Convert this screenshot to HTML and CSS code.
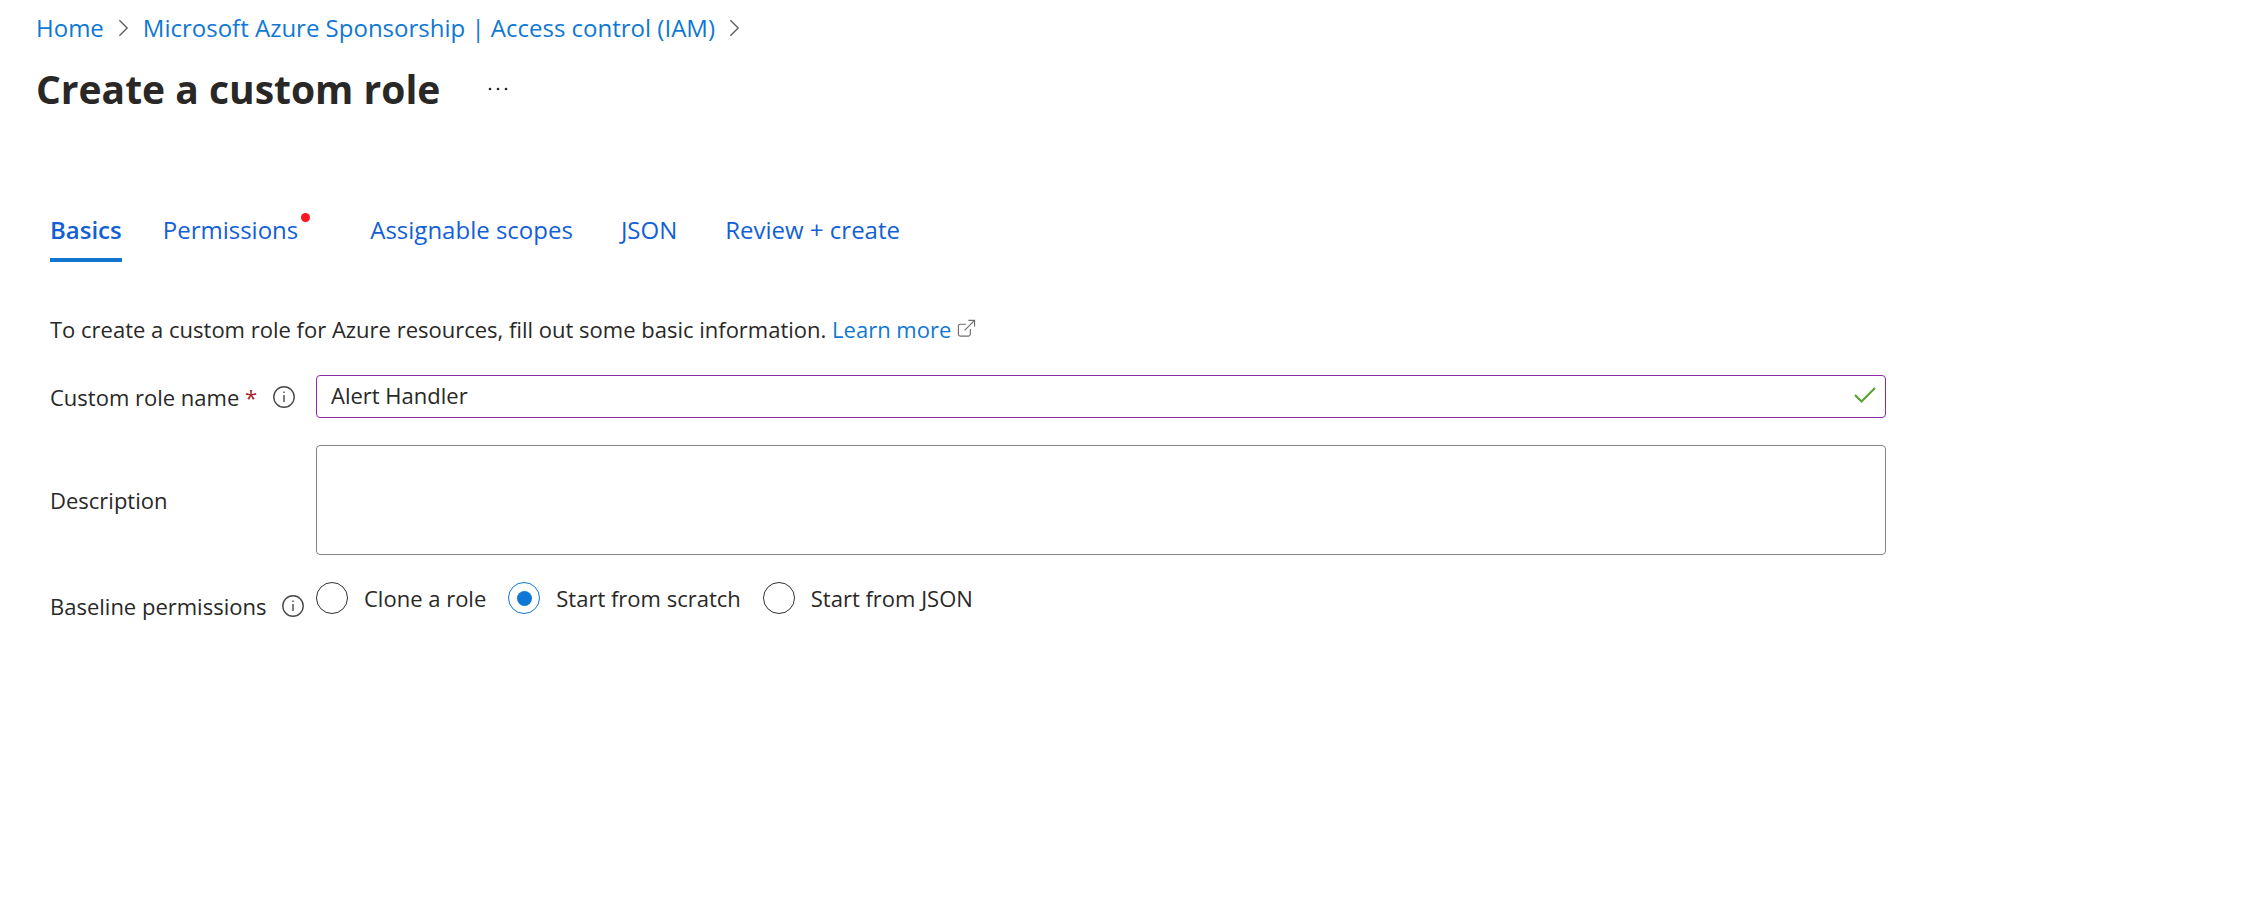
FILE: index.html
```html
<!DOCTYPE html>
<html lang="en">
<head>
<meta charset="utf-8">
<meta name="viewport" content="width=device-width, initial-scale=1">
<title>Create a custom role</title>
<link rel="stylesheet" href="styles.css">
</head>
<body>
<header class="page-header">
  <nav class="breadcrumb" aria-label="Breadcrumb">
    <a class="link" href="#home">Home</a>
    <svg class="chevron" viewBox="0 0 12 20" aria-hidden="true"><path d="M1.500 1.500L10 10L1.500 18.500"/></svg>
    <a class="link" href="#iam">Microsoft Azure Sponsorship | Access control (IAM)</a>
    <svg class="chevron" viewBox="0 0 12 20" aria-hidden="true"><path d="M1.500 1.500L10 10L1.500 18.500"/></svg>
  </nav>
  <div class="title-row">
    <h1 class="title">Create a custom role</h1>
    <button class="more" type="button" aria-label="More actions">
      <svg class="more-icon" viewBox="0 0 20 4" aria-hidden="true"><circle cx="2" cy="2" r="1.300"/><circle cx="10" cy="2" r="1.300"/><circle cx="18" cy="2" r="1.300"/></svg>
    </button>
  </div>
</header>
<main class="content">
  <div class="tabs" role="tablist">
    <button class="tab tab-active" type="button" role="tab" aria-selected="true">Basics</button>
    <button class="tab tab-flagged" type="button" role="tab" aria-selected="false">Permissions<span class="dot"></span></button>
    <button class="tab" type="button" role="tab" aria-selected="false">Assignable scopes</button>
    <button class="tab" type="button" role="tab" aria-selected="false">JSON</button>
    <button class="tab" type="button" role="tab" aria-selected="false">Review + create</button>
  </div>
  <p class="intro">To create a custom role for Azure resources, fill out some basic information. <a class="link" href="#learn">Learn more</a>
    <svg class="external" viewBox="0 0 20 20" aria-hidden="true"><path d="M9.500 5.500H3.500Q1.500 5.500 1.500 7.500V16Q1.500 18 3.500 18H12Q14 18 14 16V10.500M8 12L18.500 1.500M12 1.500H18.500V8"/></svg></p>
  <form class="form">
    <div class="row">
      <div class="label-cell">
        <label for="role-name">Custom role name <span class="required">*</span></label>
        <svg class="info" viewBox="0 0 22 22" role="img" aria-label="Info"><circle cx="11" cy="11" r="10.200"/><path d="M11 9V16M11 5.500V7"/></svg>
      </div>
      <div class="input-wrap">
        <input class="text-input" id="role-name" type="text" value="Alert Handler">
        <svg class="check" viewBox="0 0 22 16" aria-hidden="true"><path d="M1 8L7.500 14.500L21 1"/></svg>
      </div>
    </div>
    <div class="row">
      <div class="label-cell"><label for="description">Description</label></div>
      <textarea class="text-area" id="description"></textarea>
    </div>
    <div class="row row-options" role="radiogroup" aria-labelledby="baseline">
      <div class="label-cell label-low">
        <span id="baseline">Baseline permissions</span>
        <svg class="info" viewBox="0 0 22 22" role="img" aria-label="Info"><circle cx="11" cy="11" r="10.200"/><path d="M11 9V16M11 5.500V7"/></svg>
      </div>
      <div class="options">
        <label class="option"><input class="radio" type="radio" name="baseline">Clone a role</label>
        <label class="option"><input class="radio" type="radio" name="baseline" checked>Start from scratch</label>
        <label class="option"><input class="radio" type="radio" name="baseline">Start from JSON</label>
      </div>
    </div>
  </form>
</main>
</body>
</html>
```
FILE: styles.css
```css
* { box-sizing: border-box; }

body {
  margin: 0;
  background: #fff;
  color: #292827;
  font: 22px/32px "Open Sans", "Noto Sans", sans-serif;
}

.link { color: #0f78d4; text-decoration: none; }

.page-header { padding: 12px 36px 0; }

.breadcrumb { display: flex; align-items: center; gap: 14px; font-size: 24px; }

.chevron { width: 11px; height: 20px; fill: none; stroke: #605e5c; stroke-width: 1.5; }

.title-row { display: flex; align-items: center; gap: 44px; margin-top: 16px; }

.title { margin: 0; font-size: 39px; line-height: 58px; font-weight: 700; }

.more { display: flex; padding: 4px; border: 0; background: none; }

.more-icon { width: 20px; height: 4px; fill: #292827; }

.content { padding: 86px 50px 0; }

.tabs { display: flex; gap: 41px; }

.tab {
  padding: 10px 0 12px;
  border: 0;
  border-bottom: 4px solid transparent;
  background: none;
  color: #135fd6;
  font: inherit;
  font-size: 24px;
}

.tab-active { border-color: #1176d0; font-weight: 600; }

.tab-flagged { position: relative; margin-right: 24px; }

.tab-flagged ~ .tab { margin-left: 7px; }

.dot {
  position: absolute;
  top: 9px;
  right: -12px;
  width: 9px;
  height: 9px;
  border-radius: 50%;
  background: #fb1620;
}

.intro { margin: 51px 0 30px; }

.external { width: 19px; height: 19px; fill: none; stroke: #706e6c; stroke-width: 1.2; }

.form { display: grid; gap: 27px; max-width: 1836px; }

.row { display: grid; grid-template-columns: 266px 1fr; align-items: center; }

.row-options { align-items: start; }

.label-cell { display: flex; align-items: center; gap: 16px; white-space: nowrap; }

.label-low { padding-top: 8px; }

.required { color: #a4262c; }

.info { flex: none; width: 22px; height: 22px; fill: none; stroke: #4a4948; stroke-width: 1.4; }

.input-wrap { position: relative; display: flex; }

.text-input, .text-area {
  width: 100%;
  border: 1px solid #868483;
  border-radius: 4px;
  background: #fff;
  color: inherit;
  font: inherit;
  padding: 0 14px;
}

.text-input { height: 43px; padding-bottom: 3px; border-color: #8a2da5; }

.text-area { display: block; height: 110px; resize: none; }

.check {
  position: absolute;
  top: 12px;
  right: 10px;
  width: 22px;
  height: 16px;
  fill: none;
  stroke: #57a12c;
  stroke-width: 2;
}

.options { display: flex; flex-wrap: wrap; gap: 22px; }

.option { display: flex; align-items: center; gap: 16px; }

.radio {
  appearance: none;
  display: grid;
  place-items: center;
  width: 32px;
  height: 32px;
  margin: 0;
  border: 1px solid #323130;
  border-radius: 50%;
}

.radio:checked { border-color: #0f78d4; }

.radio:checked::before {
  content: "";
  width: 15px;
  height: 15px;
  border-radius: 50%;
  background: #0f78d4;
}
```
